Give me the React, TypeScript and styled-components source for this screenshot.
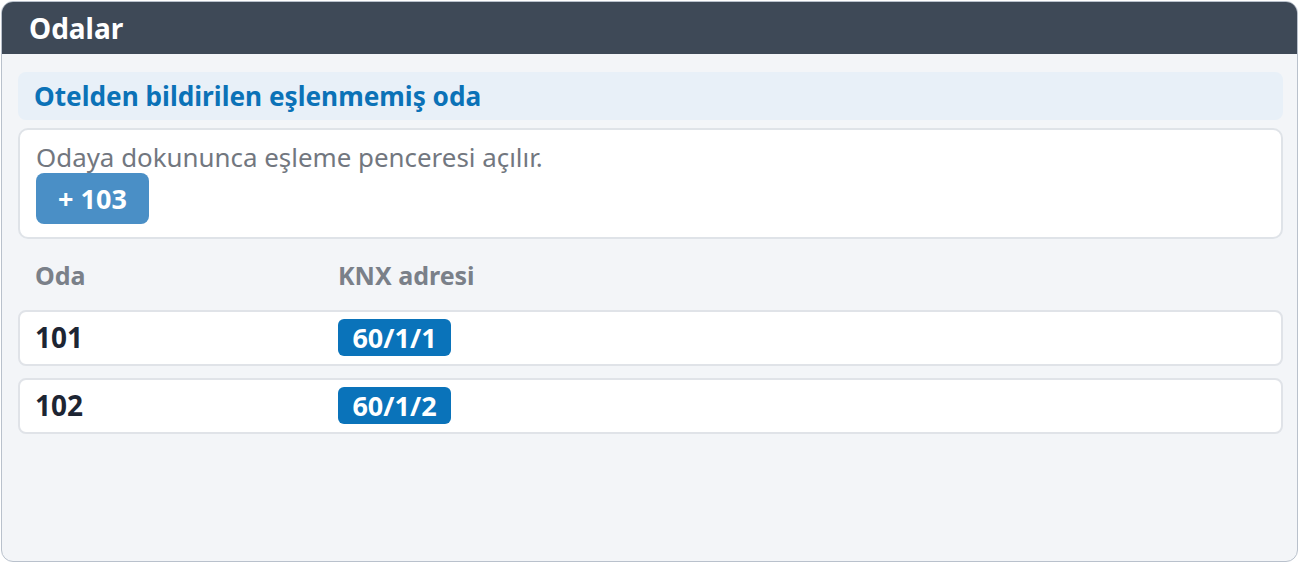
import React from "react";
import styled, { createGlobalStyle } from "styled-components";

const Global = createGlobalStyle`
  html, body { margin: 0; padding: 0; background: #ffffff; }
  body { font-family: "Noto Sans", "Open Sans", sans-serif; }
  * { box-sizing: border-box; }
`;

const Page = styled.div`
  padding: 1px 2px 2px 1px;
  height: 564px;
`;

const Panel = styled.section`
  height: 100%;
  border: 1px solid #b9c1cc;
  border-radius: 12px;
  background: #f3f5f8;
  overflow: hidden;
  display: flex;
  flex-direction: column;
`;

const Header = styled.header`
  height: 52px;
  background: #3e4957;
  display: flex;
  align-items: center;
  padding-left: 27px;
  color: #ffffff;
  font-weight: 700;
  font-size: 28px;
`;

const Body = styled.div`
  padding: 18px 14px 0 16px;
  display: flex;
  flex-direction: column;
`;

const SectionTitle = styled.div`
  height: 48px;
  background: #e8f0f8;
  border-radius: 8px;
  display: flex;
  align-items: center;
  padding-left: 16px;
  color: #0b72b7;
  font-weight: 700;
  font-size: 26.2px;
`;

const Card = styled.div`
  margin-top: 8px;
  height: 111px;
  background: #ffffff;
  border: 2px solid #dfe3e8;
  border-radius: 10px;
  padding: 13px 16px 0 16px;
  display: flex;
  flex-direction: column;
  align-items: flex-start;
`;

const Hint = styled.div`
  color: #72777f;
  font-size: 25.9px;
  line-height: 28px;
`;

const AddButton = styled.button`
  margin-top: 2px;
  width: 113px;
  height: 51px;
  border: none;
  border-radius: 8px;
  background: #4a8fc6;
  color: #ffffff;
  font-family: inherit;
  font-weight: 700;
  font-size: 27px;
  padding: 0;
  cursor: pointer;
`;

const cols = `303px 1fr`;

const HeadRow = styled.div`
  display: grid;
  grid-template-columns: ${cols};
  padding: 0 17px;
  height: 71px;
  align-items: center;
  color: #7a8089;
  font-weight: 700;
  font-size: 25px;
`;

const Row = styled.div`
  display: grid;
  grid-template-columns: ${cols};
  align-items: center;
  height: 56px;
  padding: 0 15px;
  background: #ffffff;
  border: 2px solid #e0e3e8;
  border-radius: 8px;
  & + & { margin-top: 12px; }
`;

const RoomNo = styled.div`
  color: #1d2533;
  font-weight: 700;
  font-size: 28px;
  line-height: 32px;
  margin-top: -3px;
`;

const Badge = styled.span`
  justify-self: start;
  display: inline-flex;
  align-items: center;
  justify-content: center;
  height: 37px;
  width: 113px;
  border-radius: 6px;
  background: #0a73ba;
  color: #ffffff;
  font-weight: 700;
  font-size: 27px;
  margin-top: -1px;
`;

const rooms = [
  { no: "101", knx: "60/1/1" },
  { no: "102", knx: "60/1/2" },
];

export default function App() {
  return (
    <>
      <Global />
      <Page>
        <Panel>
          <Header>Odalar</Header>
          <Body>
            <SectionTitle>Otelden bildirilen eşlenmemiş oda</SectionTitle>
            <Card>
              <Hint>Odaya dokununca eşleme penceresi açılır.</Hint>
              <AddButton>+ 103</AddButton>
            </Card>
            <HeadRow>
              <span>Oda</span>
              <span>KNX adresi</span>
            </HeadRow>
            {rooms.map((r) => (
              <Row key={r.no}>
                <RoomNo>{r.no}</RoomNo>
                <Badge>{r.knx}</Badge>
              </Row>
            ))}
          </Body>
        </Panel>
      </Page>
    </>
  );
}
